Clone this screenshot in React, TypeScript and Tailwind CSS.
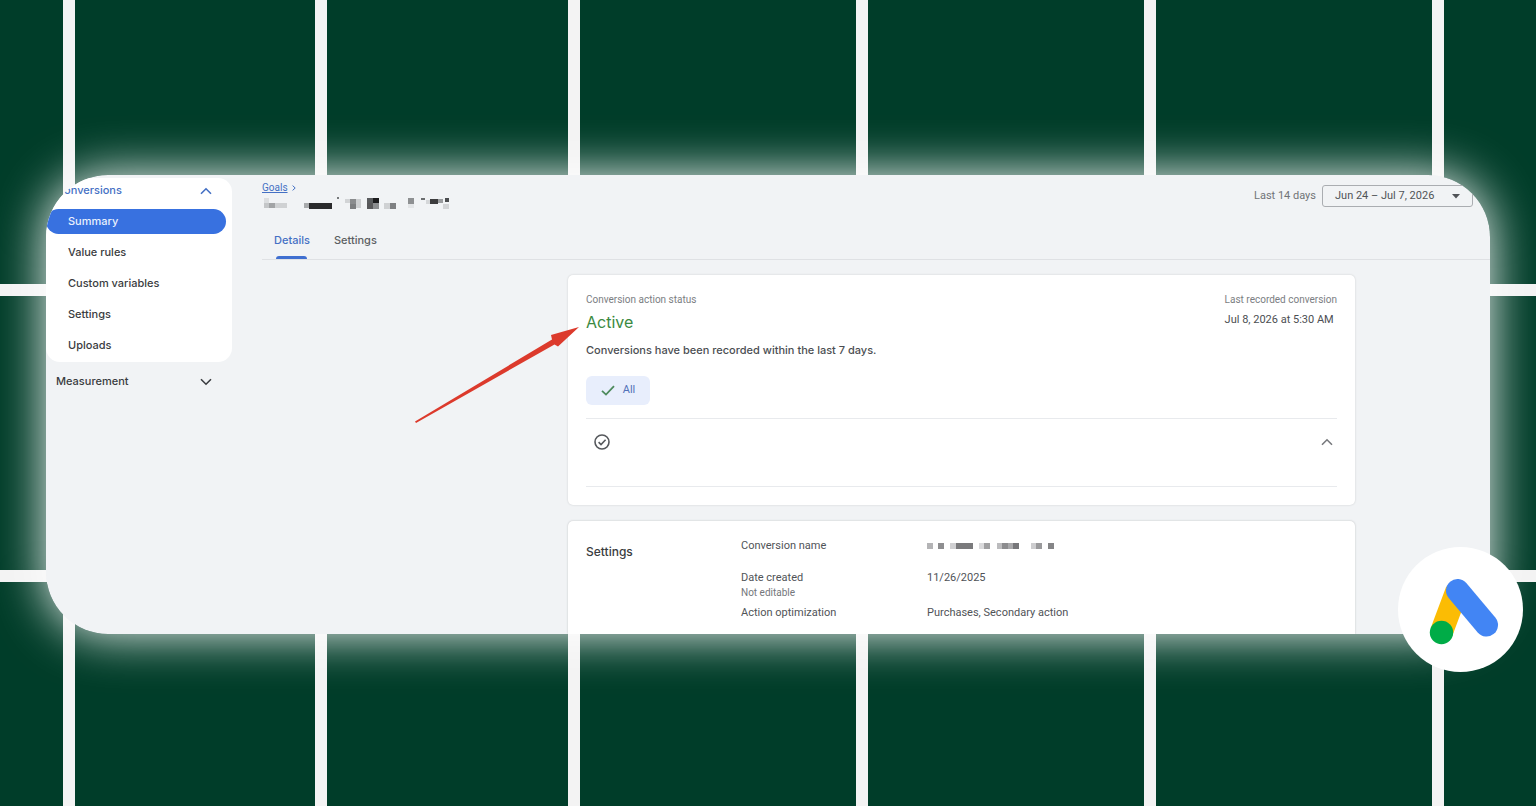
import { ReactNode } from "react";

const gridCells = Array.from({ length: 21 }, (_, i) => i);

const navItems = ["Summary", "Value rules", "Custom variables", "Settings", "Uploads"];

function Chevron({ up, className }: { up?: boolean; className?: string }) {
  return (
    <svg viewBox="0 0 12 8" className={`h-2 w-3 ${className ?? ""}`} fill="none" stroke="currentColor" strokeWidth="1.6" aria-hidden="true">
      <path d={up ? "M1 6.8 6 1.8 11 6.8" : "M1 1.2 6 6.2 11 1.2"} />
    </svg>
  );
}

type Block = [x: number, y: number, w: number, h: number, fill: string];

const titleBlocks: Block[] = [
  [1, 2, 5, 6, "#dcdee0"], [1, 7, 5, 5, "#c4c6c8"], [6, 7, 6, 5, "#a2a4a6"], [12, 7, 12, 5, "#cfd1d3"],
  [41, 7, 5, 5, "#a8aaac"], [46, 7, 23, 6, "#2a2a2c"], [74, 1, 2, 2, "#77797b"],
  [82, 3, 5, 4, "#d2d4d6"], [87, 3, 6, 5, "#8a8c8e"], [93, 3, 5, 9, "#cdcfd1"], [87, 8, 6, 5, "#7c7e80"],
  [104, 2, 6, 5, "#5a5c5e"], [110, 2, 6, 5, "#1c1c1e"], [104, 7, 6, 6, "#58585a"], [110, 7, 6, 6, "#8b8d8f"],
  [121, 7, 6, 6, "#cfd1d3"], [127, 7, 6, 6, "#7e8082"],
  [145, 2, 6, 6, "#8e9092"], [145, 8, 6, 4, "#e3e5e7"],
  [158, 2, 4, 2, "#6b6d6f"], [163, 4, 4, 4, "#d5d7d9"], [167, 3, 8, 5, "#3c3c3e"], [175, 3, 5, 4, "#9a9c9e"], [182, 2, 4, 4, "#4b4d4f"], [180, 8, 6, 5, "#d2d4d6"],
];

const nameBlocks: Block[] = [
  [0, 0, 6, 6, "#b4b4b6"], [11, 0, 6, 6, "#8e8e90"], [23, 0, 6, 6, "#d0d0d2"], [29, 0, 17, 6, "#7a7a7c"],
  [52, 0, 5, 6, "#dadadc"], [57, 0, 6, 6, "#a0a0a2"], [70, 0, 5, 6, "#bcbcbe"], [75, 0, 6, 6, "#8c8c8e"],
  [81, 0, 5, 6, "#a8a8aa"], [86, 0, 6, 6, "#77777a"], [104, 0, 5, 6, "#cdcdcf"], [109, 0, 6, 6, "#9a9a9c"], [121, 0, 6, 6, "#858587"],
];

function Redacted({ blocks, className, viewBox }: { blocks: Block[]; className: string; viewBox: string }) {
  return (
    <svg viewBox={viewBox} className={className} aria-hidden="true">
      {blocks.map(([x, y, w, h, fill], i) => (
        <rect key={i} x={x} y={y} width={w} height={h} fill={fill} />
      ))}
    </svg>
  );
}

function Row({ label, note, children }: { label: string; note?: string; children: ReactNode }) {
  return (
    <div className="grid grid-cols-[186px_1fr]">
      <dt>
        {label}
        {note && <span className="block text-[10px] leading-3 text-[#74777b]">{note}</span>}
      </dt>
      <dd>{children}</dd>
    </div>
  );
}

function Sidebar() {
  return (
    <nav aria-label="Goals navigation" className="w-[186px] shrink-0 pt-[3px] font-['Inter',sans-serif] text-[11px] font-medium text-[#3a3c40]">
      <div className="flex flex-col gap-1.5 rounded-[14px] bg-white pb-1">
        <button type="button" aria-expanded="true" className="flex h-[25px] items-center justify-between pl-2.5 pr-5 text-[#4470c4]">
          Conversions
          <Chevron up />
        </button>
        {navItems.map((item, i) => (
          <a
            key={item}
            href="#"
            className={
              i === 0
                ? "mr-1.5 flex h-[25px] items-center rounded-full bg-[#3871e0] pl-[22px] text-[#e9f0fd]"
                : "mr-1.5 flex h-[25px] items-center pl-[22px]"
            }
          >
            {item}
          </a>
        ))}
      </div>
      <button type="button" aria-expanded="false" className="mt-[7px] flex h-[25px] w-full items-center justify-between pl-2.5 pr-5">
        Measurement
        <Chevron />
      </button>
    </nav>
  );
}

function StatusCard() {
  return (
    <section className="rounded-[5px] bg-white px-[18px] pb-[18px] pt-[17px] shadow-[0_0_2px_rgba(60,64,67,0.22)]">
      <div className="flex justify-between">
        <div>
          <p className="text-[10px] leading-4 text-[#7b7e82]">Conversion action status</p>
          <h2 className="font-['Inter',sans-serif] text-[16px] leading-7 text-[#3b8a41]">Active</h2>
        </div>
        <div>
          <p className="text-[10px] leading-4 text-[#7b7e82]">Last recorded conversion</p>
          <p className="text-[11px] leading-6 text-[#4b4e52]">Jul 8, 2026 at 5:30 AM</p>
        </div>
      </div>
      <p className="mt-1 font-['Inter',sans-serif] text-[11px] font-medium leading-5 text-[#4b4e52]">
        Conversions have been recorded within the last 7 days.
      </p>
      <button type="button" className="mt-4 flex h-[29px] w-16 items-center justify-center gap-2 rounded-md bg-[#e8eefc] text-[11px] text-[#5271b8]">
        <svg viewBox="0 0 14 11" className="h-[11px] w-3.5" fill="none" stroke="#4d8a5c" strokeWidth="1.8" aria-hidden="true">
          <path d="M1 5.8 5 9.6 13 1.2" />
        </svg>
        All
      </button>
      <div className="mt-[13px] flex h-[69px] items-start justify-between border-y border-[#e8eaed] pl-2 pr-1 pt-[15px]">
        <svg viewBox="0 0 16 16" className="size-4" fill="none" stroke="#55585c" strokeWidth="1.6" aria-hidden="true">
          <circle cx="8" cy="8" r="7" />
          <path d="M4.6 8.2 7 10.5 11.6 5.8" />
        </svg>
        <button type="button" aria-label="Collapse" className="mt-1 text-[#77797d]">
          <Chevron up />
        </button>
      </div>
    </section>
  );
}

function SettingsCard() {
  return (
    <section className="mt-4 grid grid-cols-[155px_1fr] rounded-t-[5px] bg-white px-[18px] pb-3 pt-4 text-[#505357] shadow-[0_0_2px_rgba(60,64,67,0.3)]">
      <h2 className="pt-1.5 font-['Inter',sans-serif] text-[12px] font-medium leading-[18px] text-[#3a3c40]">Settings</h2>
      <dl className="text-[11px] leading-[18px]">
        <Row label="Conversion name">
          <Redacted blocks={nameBlocks} viewBox="0 0 128 6" className="mt-1.5 h-1.5 w-32" />
        </Row>
        <div className="mt-3.5">
          <Row label="Date created" note="Not editable">11/26/2025</Row>
        </div>
        <div className="mt-[5px]">
          <Row label="Action optimization">Purchases, Secondary action</Row>
        </div>
      </dl>
    </section>
  );
}

function Header() {
  return (
    <header>
      <div className="flex items-start justify-between">
        <div className="pt-[5px]">
          <p className="flex h-[15px] items-center gap-1 text-[10px] text-[#4470c4]">
            <a href="#" className="underline">Goals</a>
            <svg viewBox="0 0 4 6" className="h-1.5 w-1" fill="none" stroke="currentColor" aria-hidden="true">
              <path d="M.6.6 3.2 3 .6 5.4" />
            </svg>
          </p>
          <Redacted blocks={titleBlocks} viewBox="-1 0 190 14" className="mt-px h-3.5 w-[190px]" />
        </div>
        <div className="mr-[17px] flex items-center gap-1.5 pt-2.5">
          <span className="text-[11px] text-[#707377]">Last 14 days</span>
          <button type="button" className="flex h-[22px] w-[151px] items-center justify-between rounded-[3px] border border-[#aaadb1] pl-3 pr-3 text-[11px] text-[#505357]">
            Jun 24 – Jul 7, 2026
            <svg viewBox="0 0 8 5" className="h-[5px] w-2" fill="#505357" aria-hidden="true">
              <path d="M0 0h8L4 4.6z" />
            </svg>
          </button>
        </div>
      </div>
      <div role="tablist" className="mt-4 flex h-[34px] gap-6 border-b border-[#dfe1e4] pl-3 font-['Inter',sans-serif] text-[11px] font-medium text-[#5c5f63]">
        <button type="button" role="tab" aria-selected="true" className="flex flex-col items-center justify-between pt-1.5 text-[#4470c4]">
          Details
          <span className="h-[3px] w-[31px] rounded-t-full bg-[#3f6fd0]" />
        </button>
        <button type="button" role="tab" aria-selected="false" className="flex items-start pt-1.5">
          Settings
        </button>
      </div>
    </header>
  );
}

function AdsBadge() {
  return (
    <svg viewBox="0 0 125 125" className="absolute -bottom-[38px] -right-[33px] size-[125px]" role="img" aria-label="Google Ads">
      <circle cx="62.5" cy="62.5" r="62.5" fill="#fff" />
      <path d="M59 43.500 43.500 85" stroke="#fbbc04" strokeWidth="23" />
      <path d="M59.500 43.500 88.500 78" stroke="#4285f4" strokeWidth="23" strokeLinecap="round" />
      <circle cx="43.500" cy="85.500" r="11.700" fill="#00ac47" />
    </svg>
  );
}

export default function App() {
  return (
    <div className="grid min-h-screen grid-cols-1 overflow-hidden font-['Roboto',sans-serif]">
      <div
        aria-hidden="true"
        className="col-start-1 row-start-1 grid grid-cols-[63fr_240fr_241fr_276fr_276fr_276fr_92fr] grid-rows-[284fr_274fr_224fr] gap-3 bg-[#f3f3f3]"
      >
        {gridCells.map((c) => (
          <div key={c} className="bg-[#003d29]" />
        ))}
      </div>
      <div className="col-start-1 row-start-1 px-[46px] pb-20 pt-[175px]">
        <div className="relative">
          <div className="rounded-[62px] shadow-[0_0_50px_rgba(255,255,255,0.98)]">
            <div className="flex overflow-hidden rounded-[62px] bg-[#f1f3f5]">
              <Sidebar />
              <main className="ml-[30px] min-w-0 flex-1">
                <Header />
                <div className="relative pl-[306px] pr-[135px] pt-[15px]">
                  <svg viewBox="0 0 170 100" className="absolute left-[151px] top-16 h-[100px] w-[170px]" aria-hidden="true">
                    <path d="M2 97.500 139 15.500 138 11 166 3 145 22.500 141.500 20.500 3 99z" fill="#dc3a2c" />
                  </svg>
                  <StatusCard />
                  <SettingsCard />
                </div>
              </main>
            </div>
          </div>
          <AdsBadge />
        </div>
      </div>
    </div>
  );
}
